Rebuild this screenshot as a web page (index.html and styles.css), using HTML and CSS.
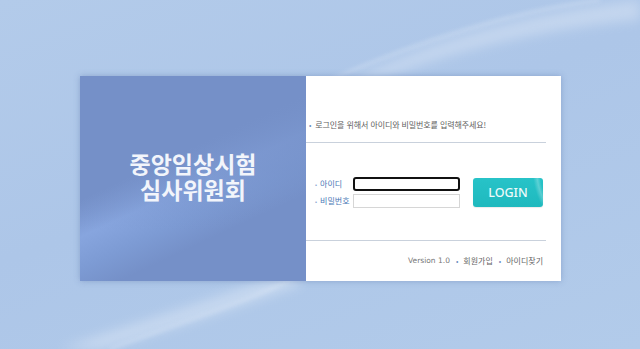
FILE: index.html
```html
<!DOCTYPE html>
<html lang="ko">
<head>
<meta charset="utf-8">
<title>중앙임상시험 심사위원회</title>
<link rel="stylesheet" href="styles.css">
</head>
<body>
<svg class="bg-art" viewBox="0 0 640 349" preserveAspectRatio="none" aria-hidden="true">
  <defs>
    <filter id="blur" x="-20%" y="-20%" width="140%" height="140%"><feGaussianBlur stdDeviation="6"/></filter>
    <filter id="blur2" x="-20%" y="-20%" width="140%" height="140%"><feGaussianBlur stdDeviation="2"/></filter>
  </defs>
  <path d="M300 110 C 380 60, 480 20, 640 0 L 640 20 C 520 30, 420 60, 300 110 Z" fill="#ffffff" opacity="0.28" filter="url(#blur)"/>
  <path d="M330 80 C 420 40, 520 10, 600 0" stroke="#ffffff" stroke-width="2" fill="none" opacity="0.35" filter="url(#blur2)"/>
  <path d="M60 349 C 140 320, 220 300, 300 265 L 300 285 C 230 310, 150 335, 100 349 Z" fill="#ffffff" opacity="0.3" filter="url(#blur)"/>
  <path d="M110 349 C 190 320, 250 300, 290 280" stroke="#ffffff" stroke-width="1.5" fill="none" opacity="0.4" filter="url(#blur2)"/>
</svg>
<main class="stage">
  <section class="card">
    <div class="brand">
      <h1 class="brand-title"><span class="brand-line">중앙임상시험</span><span class="brand-line">심사위원회</span></h1>
    </div>
    <div class="panel">
      <div class="intro">
        <p class="intro-text"><span class="dot">•</span>로그인을 위해서 아이디와 비밀번호를 입력해주세요!</p>
      </div>
      <form class="login" onsubmit="return false">
        <div class="labels">
          <label class="label" for="uid"><span class="ldot">•</span>아이디</label>
          <label class="label" for="upw"><span class="ldot">•</span>비밀번호</label>
        </div>
        <div class="inputs">
          <input id="uid" class="field field-focus" type="text">
          <input id="upw" class="field" type="password">
        </div>
        <button class="login-btn" type="submit">LOGIN</button>
      </form>
      <div class="footer">
        <span class="ver">Version 1.0</span>
        <span class="fdot">•</span><a class="flink" href="#">회원가입</a>
        <span class="fdot">•</span><a class="flink" href="#">아이디찾기</a>
      </div>
    </div>
  </section>
</main>
</body>
</html>
```
FILE: styles.css
```css
* { box-sizing: border-box; }
html, body { margin: 0; padding: 0; }
body {
  width: 640px;
  height: 349px;
  overflow: hidden;
  position: relative;
  background: linear-gradient(160deg, #b3cbea 0%, #adc6e8 45%, #b2cbea 100%);
  font-family: "Noto Sans CJK KR", "Noto Sans", sans-serif;
}
.bg-art {
  position: absolute;
  left: 0; top: 0;
  width: 640px; height: 349px;
  z-index: 0;
}
.stage {
  position: relative;
  z-index: 1;
  padding: 76px 0 0 80px;
}
.card {
  display: flex;
  width: 481px;
  height: 205px;
  box-shadow: 0 0 6px rgba(90, 120, 170, 0.45);
}
.brand {
  width: 226px;
  flex: none;
  display: flex;
  align-items: center;
  justify-content: center;
  background:
    linear-gradient(180deg, #7590c8 0%, rgba(117,144,200,0.6) 45%, rgba(117,144,200,0) 75%),
    linear-gradient(155deg, rgba(135,165,222,0) 40%, rgba(135,165,222,1) 52%, rgba(125,155,212,1) 62%, rgba(117,144,200,0) 72%),
    #7590c8;
}
.brand-title {
  margin: 0;
  padding-bottom: 6px;
  color: #f2f5fb;
  font-size: 23px;
  font-weight: 700;
  text-align: center;
}
.brand-line {
  display: block;
  line-height: 26px;
  height: 26px;
}
.panel {
  flex: 1;
  background: #ffffff;
  display: flex;
  flex-direction: column;
  padding-right: 15px;
}
.intro {
  height: 67px;
  display: flex;
  align-items: flex-end;
  border-bottom: 1px solid #c9d1dc;
  padding-bottom: 12px;
}
.intro-text {
  margin: 0;
  padding-left: 3px;
  font-size: 8px;
  line-height: 10px;
  color: #606060;
  letter-spacing: -0.1px;
}
.dot { color: #6f8fc0; margin-right: 4px; font-size: 7px; }
.login {
  height: 98px;
  margin: 0;
  border-bottom: 1px solid #c9d1dc;
  display: flex;
  align-items: center;
  padding: 2px 0 0 9px;
}
.labels {
  width: 38px;
  display: flex;
  flex-direction: column;
  gap: 3px;
}
.label {
  font-size: 8px;
  line-height: 14px;
  height: 14px;
  color: #4a78b6;
  white-space: nowrap;
}
.ldot { color: #8aa6cf; margin-right: 3px; font-size: 6px; }
.inputs {
  display: flex;
  flex-direction: column;
  gap: 3px;
  width: 107px;
}
.field {
  display: block;
  width: 107px;
  height: 14px;
  margin: 0;
  padding: 0 3px;
  border: 1px solid #d6d6d6;
  background: #fff;
  font-size: 8px;
  outline: none;
}
.field-focus {
  border: 2px solid #111;
  border-radius: 3px;
}
.login-btn {
  margin-left: 13px;
  width: 70px;
  height: 29px;
  border: 0;
  border-radius: 3px;
  color: #eefafa;
  font-family: "Noto Sans", "Open Sans", sans-serif;
  font-size: 12.5px;
  font-weight: 500;
  padding: 0;
  background:
    radial-gradient(ellipse 40px 60px at 95px -8px, rgba(255,255,255,0) 70%, rgba(255,255,255,0.25) 78%, rgba(255,255,255,0) 88%),
    linear-gradient(180deg, #27c3c8 0%, #1fb9be 100%);
  box-shadow: 0 1px 1px rgba(0,0,0,0.08);
}
.footer {
  flex: 1;
  display: flex;
  align-items: center;
  justify-content: flex-end;
  padding-right: 3px;
  font-size: 8px;
  color: #666;
  padding-bottom: 1px;
}
.ver { font-family: "DejaVu Sans", sans-serif; font-size: 7.5px; color: #777; }
.fdot { color: #6f8fc0; margin: 0 5px 0 6px; font-size: 7px; }
.flink { color: #666; text-decoration: none; }
```
